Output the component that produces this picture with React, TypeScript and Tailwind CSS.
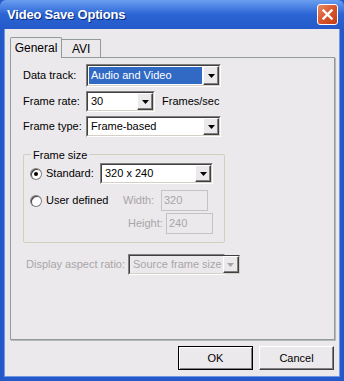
import React from "react";

const font = { fontFamily: '"Liberation Sans", Arial, sans-serif' };

function Arrow({ disabled }: { disabled?: boolean }) {
  return (
    <div className="w-[16px] h-full flex items-center justify-center bg-[#ece9ec] border border-t-white border-l-white border-b-[#404040] border-r-[#404040] shadow-[inset_-1px_-1px_0_#808080]">
      <svg width="7" height="4" viewBox="0 0 7 4">
        <path d="M0 0h7L3.5 4z" fill={disabled ? "#a8a5a8" : "#000"} />
      </svg>
    </div>
  );
}

function Combo({
  text,
  w,
  h = "h-[21px]",
  selected,
  disabled,
}: {
  text: string;
  w: string;
  h?: string;
  selected?: boolean;
  disabled?: boolean;
}) {
  return (
    <div
      className={`${w} ${h} shrink-0 flex border border-t-[#808080] border-l-[#808080] border-b-white border-r-white`}
    >
      <div
        className={`flex-1 flex items-stretch border border-t-[#404040] border-l-[#404040] border-b-[#d4d0c8] border-r-[#d4d0c8] ${
          disabled ? "bg-[#ece9ec]" : "bg-white"
        }`}
      >
        <div className="flex-1 flex items-center p-[1px] overflow-hidden">
          <span
            className={`flex-1 h-full flex items-center pl-[2px] whitespace-nowrap overflow-hidden ${
              selected ? "bg-[#316ac5] text-white" : disabled ? "text-[#a8a5a8]" : "text-black"
            }`}
          >
            {text}
          </span>
        </div>
        <Arrow disabled={disabled} />
      </div>
    </div>
  );
}

function Radio({ checked }: { checked?: boolean }) {
  return (
    <div className="w-[12px] h-[12px] rounded-full bg-[#808080] p-[1px] shrink-0">
      <div className="w-full h-full rounded-full bg-white flex items-center justify-center shadow-[inset_1px_1px_0_#404040]">
        {checked && <div className="w-[4px] h-[4px] rounded-full bg-black" />}
      </div>
    </div>
  );
}

function Field({ value }: { value: string }) {
  return (
    <div className="w-[47px] h-[21px] border border-[#c5c2c5] bg-[#ece9ec] flex items-center pl-[2px] text-[#a8a5a8]">
      {value}
    </div>
  );
}

export default function App() {
  return (
    <div
      className="relative w-[344px] h-[381px] flex flex-col bg-[#2459c9] text-[11px] text-black overflow-hidden select-none"
      style={font}
    >
      {/* title bar */}
      <div className="h-[29px] shrink-0 flex items-center justify-between pl-[7px] pr-[6px] bg-gradient-to-b from-[#6a9ef0] via-[#2b64d4] to-[#2459c9] rounded-t-[6px]">
        <span className="text-white font-bold text-[13px] tracking-[-0.2px] [text-shadow:1px_1px_0_#0a2a80]">
          Video Save Options
        </span>
        <div className="w-[21px] h-[21px] rounded-[3px] border border-white bg-gradient-to-br from-[#e98a63] via-[#d8552c] to-[#c23d17] flex items-center justify-center">
          <svg width="11" height="11" viewBox="0 0 11 11">
            <path d="M1.5 1.5l8 8M9.5 1.5l-8 8" stroke="#fff" strokeWidth="2.4" strokeLinecap="square" />
          </svg>
        </div>
      </div>

      {/* body */}
      <div className="flex-1 mx-[4px] mb-[4px] bg-[#ece9ec] border-l border-r border-b border-[#6f97e6] flex flex-col px-[4px] pt-[7px]">
        {/* tabs */}
        <div className="flex items-end h-[21px] pl-[1px]">
          <div className="h-[21px] w-[52px] bg-[#ece9ec] border border-b-0 border-[#919b9c] rounded-t-[2px] flex items-center justify-center relative z-10 -mb-[1px] text-[12px]">
            General
          </div>
          <div className="h-[18px] w-[39px] border border-b-0 border-l-0 border-[#919b9c] flex items-center pl-[10px] text-[12px]">
            AVI
          </div>
        </div>

        {/* panel */}
        <div className="h-[283px] w-[325px] ml-[1px] border border-[#919b9c] shadow-[1px_1px_0_#b8b8b8] bg-[#ece9ec] flex flex-col pl-[12px] pt-[6px]">
          <div className="flex items-center">
            <span className="w-[63px]">Data track:</span>
            <Combo text="Audio and Video" w="w-[135px]" h="h-[23px]" selected />
          </div>
          <div className="flex items-center mt-[4px]">
            <span className="w-[63px]">Frame rate:</span>
            <Combo text="30" w="w-[69px]" />
            <span className="ml-[7px]">Frames/sec</span>
          </div>
          <div className="flex items-center mt-[4px]">
            <span className="w-[63px]">Frame type:</span>
            <Combo text="Frame-based" w="w-[135px]" />
          </div>

          {/* frame size group */}
          <div className="relative w-[202px] mt-[17px] border border-[#d0d0bf] rounded-[2px] pl-[6px] pr-[11px] pt-[8px] pb-[8px]">
            <span className="absolute -top-[8px] left-[7px] px-[2px] bg-[#ece9ec]">Frame size</span>
            <div className="flex items-center">
              <Radio checked />
              <span className="ml-[4px] w-[54px]">Standard:</span>
              <Combo text="320 x 240" w="w-[113px]" />
            </div>
            <div className="flex items-center mt-[6px]">
              <Radio />
              <span className="ml-[4px] w-[77px]">User defined</span>
              <span className="w-[38px] text-[#a8a5a8]">Width:</span>
              <Field value="320" />
            </div>
            <div className="flex items-center justify-end mt-[2px]">
              <span className="w-[38px] text-[#a8a5a8]">Height:</span>
              <Field value="240" />
            </div>
          </div>

          <div className="flex items-center mt-[11px]">
            <span className="w-[105px] shrink-0 pl-[3px] whitespace-nowrap text-[#a8a5a8]">
              Display aspect ratio:
            </span>
            <Combo text="Source frame size" w="w-[97px]" disabled />
          </div>
        </div>

        {/* buttons */}
        <div className="flex justify-end gap-[6px] mt-[6px] pr-[1px]">
          <button className="w-[75px] h-[24px] border border-black bg-[#ece9ec] shadow-[inset_1px_1px_0_#fff,inset_-1px_-1px_0_#808080] text-[11px]">
            OK
          </button>
          <button className="w-[75px] h-[24px] border border-t-white border-l-white border-b-[#404040] border-r-[#404040] bg-[#ece9ec] shadow-[inset_-1px_-1px_0_#808080] text-[11px]">
            Cancel
          </button>
        </div>
      </div>
    </div>
  );
}
